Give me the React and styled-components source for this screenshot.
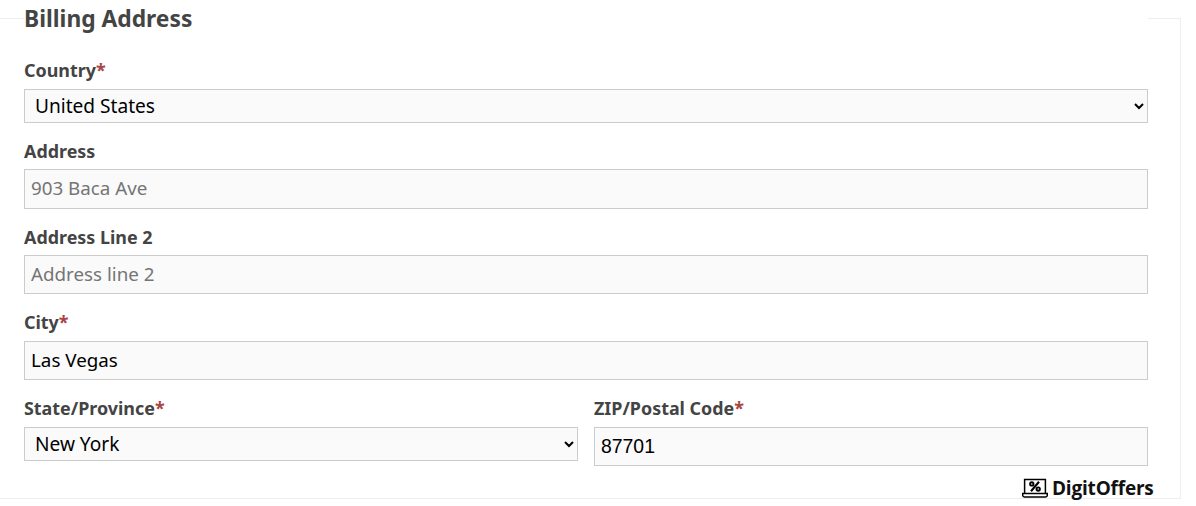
import React from 'react';
import styled, { createGlobalStyle } from 'styled-components';

const Global = createGlobalStyle`
  html, body { margin: 0; padding: 0; background: #fff; }
  body { font-family: "Noto Sans", "Open Sans", sans-serif; overflow: hidden; }
`;
const Page = styled.div`
  position: relative;
  width: 1196px;
  height: 506px;
  overflow: hidden;
`;
const Fieldset = styled.fieldset`
  box-sizing: border-box;
  width: 1182px;
  height: 499px;
  margin: 0 0 0 -1px;
  padding: 0 32px 0 24px;
  border: 1px solid #eeeeee;
  border-radius: 0;
`;
const Legend = styled.legend`
  display: block;
  width: 100%;
  height: 37px;
  padding: 0;
  margin: 0;
  font-size: 22.8px;
  line-height: 37px;
  font-weight: 700;
  color: #444444;
`;
const Stack = styled.div`
  display: flex;
  flex-direction: column;
  padding-top: 18px;
`;
const Field = styled.div`
  display: flex;
  flex-direction: column;
  min-width: 0;
`;
const Label = styled.label`
  display: block;
  height: 46.4px;
  padding-top: 16px;
  box-sizing: border-box;
  font-size: 17.9px;
  line-height: 24px;
  font-weight: 700;
  color: #444444;
  &.first { height: 33.66px; padding-top: 3px; }
`;
const Star = styled.span`
  color: #a94442;
`;
const Select = styled.select`
  box-sizing: border-box;
  width: 100%;
  height: 34px;
  padding: 0 6px;
  background: #fafafa;
  border: 1px solid #cccccc;
  border-radius: 0;
  font-family: "Noto Sans", sans-serif;
  font-size: 19.1px;
  color: #000;
`;
const Input = styled.input`
  box-sizing: border-box;
  width: 100%;
  height: 39.5px;
  padding: 0 6px ${p => (p.$digits ? '0' : '2px')};
  background: #fafafa;
  border: 1px solid #cccccc;
  border-radius: 0;
  font-family: ${p => (p.$digits ? '"Liberation Sans"' : '"Noto Sans"')}, sans-serif;
  font-size: ${p => (p.$digits ? '19.4px' : '18.8px')};
  color: #000;
  &::placeholder { color: #757575; opacity: 1; }
`;
const Row = styled.div`
  display: grid;
  grid-template-columns: 1fr 1fr;
  column-gap: 16px;
`;
const Badge = styled.div`
  position: absolute;
  left: 1022px;
  top: 477px;
  display: flex;
  align-items: center;
  gap: 4px;
  font-family: "Open Sans", sans-serif;
  font-size: 19px;
  line-height: 22px;
  font-weight: 700;
  color: #111;
  letter-spacing: -0.2px;
`;

const Laptop = () => (
  <svg width="26" height="22" viewBox="0 0 26 22" fill="none" stroke="#000">
    <path d="M2.6 16.5V2.6h20.8v13.9" strokeWidth="1.5" />
    <path d="M.7 16.6h24.6v1.6c0 1-.7 1.7-1.6 1.7H2.3c-.9 0-1.6-.7-1.6-1.7z" strokeWidth="1.5" />
    <path d="M17 4.8 9 14.2" strokeWidth="2.1" />
    <circle cx="9.8" cy="6.9" r="1.7" strokeWidth="1.9" />
    <circle cx="16.2" cy="12.1" r="1.7" strokeWidth="1.9" />
  </svg>
);

export default function App() {
  return (
    <Page>
      <Global />
      <Fieldset>
        <Legend>Billing Address</Legend>
        <Stack>
          <Field>
            <Label className="first">Country<Star>*</Star></Label>
            <Select defaultValue="United States">
              <option>United States</option>
            </Select>
          </Field>
          <Field>
            <Label>Address</Label>
            <Input placeholder="903 Baca Ave" />
          </Field>
          <Field>
            <Label>Address Line 2</Label>
            <Input placeholder="Address line 2" />
          </Field>
          <Field>
            <Label>City<Star>*</Star></Label>
            <Input defaultValue="Las Vegas" />
          </Field>
          <Row>
            <Field>
              <Label>State/Province<Star>*</Star></Label>
              <Select defaultValue="New York">
                <option>New York</option>
              </Select>
            </Field>
            <Field>
              <Label>ZIP/Postal Code<Star>*</Star></Label>
              <Input $digits defaultValue="87701" />
            </Field>
          </Row>
        </Stack>
      </Fieldset>
      <Badge><Laptop />DigitOffers</Badge>
    </Page>
  );
}
